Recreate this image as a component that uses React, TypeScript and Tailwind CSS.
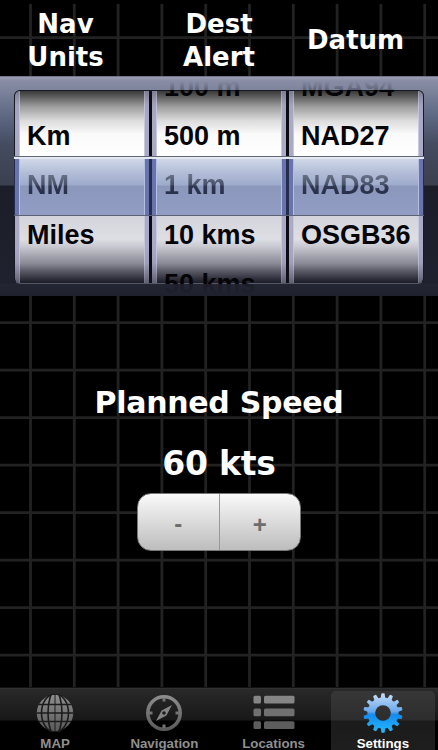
import { useState } from "react";
import clsx from "clsx";

const wheels = [
  { id: "units", rows: ["", "Km", "NM", "Miles", ""] },
  { id: "alert", rows: ["100 m", "500 m", "1 km", "10 kms", "50 kms"] },
  { id: "datum", rows: ["MGA94", "NAD27", "NAD83", "OSGB36", ""] },
];

const verticals = Array.from({ length: 10 }, (_, i) => 30.5 + i * 43.8);
const horizontals = Array.from({ length: 14 }, (_, i) => 37.7 + i * 47.5);

function Grid() {
  return (
    <svg className="absolute inset-0" width="438" height="750" stroke="#222223" strokeWidth="2.8">
      {verticals.map((x) => (
        <line key={x} x1={x} x2={x} y1="4" y2="687" />
      ))}
      {horizontals.map((y) => (
        <line key={y} x1="0" x2="438" y1={y} y2={y} />
      ))}
    </svg>
  );
}

function Picker() {
  return (
    <div className="relative h-[220px] overflow-hidden bg-[linear-gradient(180deg,#474d5c_0,#9ca1b8_1px,#8e93ab_3px,#7c839b_15px,#5b6680_42px,#454c60_68px,#3b404f_109px,#1b1d29_110px,#20222f_219px)] px-[14px]">
      {/* Wheels */}
      <div className="mt-[14px] flex h-[194px] gap-[3px] overflow-hidden rounded-[6px] border border-[#171a23] border-b-[#555766] bg-[#0b0c12]">
        {wheels.map((wheel) => (
          <div
            key={wheel.id}
            className="flex-1 border-x-4 border-[#aaaac7] bg-[linear-gradient(180deg,#4b4b4b_0,#777_7px,#aaa_17px,#ddd_30px,#fafafa_43px,#fff_65px,#fff_115px,#d3d3dc_125px,#dedee4_148px,#c2c2cb_158px,#90909d_174px,#5e5e6b_184px,#272733_192px)] shadow-[inset_1px_0_#c8c8de,inset_-1px_0_#c8c8de]"
          />
        ))}
      </div>
      {/* Darkening of the wheel edges */}
      <div className="absolute top-[15px] left-[15px] h-[192px] w-[408px] rounded-[5px] bg-[linear-gradient(180deg,rgba(20,20,24,.3)_0,rgba(20,20,24,.05)_14px,transparent_30px,transparent_155px,rgba(20,20,30,.08)_172px,rgba(20,20,30,.5)_192px)]" />

      {/* Selection bar */}
      <div className="absolute top-[80px] left-[14px] flex h-[60px] w-[410px] gap-[3px] border-y border-[#5c6175] border-t-[#62677a] bg-[#252c4c] px-px">
        {wheels.map((wheel) => (
          <div
            key={wheel.id}
            className="flex-1 border-x-4 border-[#6974ae] bg-[linear-gradient(180deg,#fff_0,#fff_1px,#d0d8e8_2px,#b1bdd7_16px,#9eabcb_28px,#8c97bc_29px,#929dc4_58px)] shadow-[inset_1px_0_#b5bfe0,inset_-1px_0_#b5bfe0]"
          />
        ))}
        <div className="absolute top-0 left-0 h-[2px] w-full bg-[#e3e8f1]" />
      </div>

      {/* Values */}
      <div className="absolute -top-[13px] left-[15px] flex w-[408px] gap-[3px]">
        {wheels.map((wheel) => (
          <ul key={wheel.id} className="flex-1 pl-[12px] text-[27px] font-bold whitespace-nowrap">
            {wheel.rows.map((row, i) => (
              <li
                key={i}
                className={clsx(
                  "flex h-[49.2px] items-center leading-none",
                  i === 2
                    ? "bg-[linear-gradient(180deg,#656e82_15px,#465067_24px,#303951_25px,#222b43_38px)] bg-clip-text text-transparent"
                    : "text-[#050507]",
                )}
              >
                {row}
              </li>
            ))}
          </ul>
        ))}
      </div>

      {/* Frame over the wheels */}
      <div className="absolute top-[1px] left-0 h-[13px] w-full bg-[linear-gradient(180deg,#989db4_0,#888da5_4px,rgba(124,131,155,.75)_13px)]" />
      <div className="absolute bottom-0 left-0 h-[12px] w-full bg-[linear-gradient(180deg,rgba(38,39,54,.7),#20212e)]" />
    </div>
  );
}

function GlobeIcon() {
  return (
    <svg width="38" height="38" viewBox="0 0 38 38">
      <defs>
        <linearGradient id="grey" gradientUnits="userSpaceOnUse" x1="0" y1="0" x2="0" y2="38">
          <stop offset="0" stopColor="#909090" />
          <stop offset="1" stopColor="#585858" />
        </linearGradient>
      </defs>
      <circle cx="19" cy="19" r="18.2" fill="url(#grey)" />
      <g fill="none" stroke="#1c1c1c" strokeWidth="1.6">
        <path d="M1 19h36M3 10.5h32M3 27.5h32" />
        <path d="M19 0v38" strokeWidth="1" />
        <ellipse cx="19" cy="19" rx="7" ry="22" />
        <ellipse cx="19" cy="19" rx="13.5" ry="19" />
      </g>
    </svg>
  );
}

function CompassIcon() {
  return (
    <svg width="38" height="38" viewBox="0 0 38 38">
      <circle cx="19" cy="19" r="16.2" fill="none" stroke="url(#grey)" strokeWidth="3.6" />
      <path d="M17.5 4h3v3.5h-3zM17.5 30.5h3V34h-3zM4 17.5h3.5v3H4zM30.5 17.5H34v3h-3.5z" fill="#747474" />
      <path
        d="M27 11L21.4 21.4 11 27l5.6-10.4zM19 17.2a1.8 1.8 0 1 0 0 3.6 1.8 1.8 0 1 0 0-3.6z"
        fill="#858585"
        fillRule="evenodd"
      />
    </svg>
  );
}

function ListIcon() {
  return (
    <svg width="42" height="38" viewBox="0 0 42 38">
      {["#858585", "#707070", "#5d5d5d"].map((fill, i) => (
        <g key={fill} fill={fill}>
          <rect x="0.5" y={1.7 + i * 12.8} width="7.5" height="7.8" rx="1.5" />
          <rect x="11" y={1.7 + i * 12.8} width="30.5" height="7.8" rx="1.5" />
        </g>
      ))}
    </svg>
  );
}

function GearIcon() {
  return (
    <svg width="40" height="40" viewBox="0 0 40 40">
      <defs>
        <linearGradient id="blue" gradientUnits="userSpaceOnUse" x1="0" y1="0" x2="0" y2="40">
          <stop offset="0" stopColor="#c9def8" />
          <stop offset="0.46" stopColor="#69a9ee" />
          <stop offset="0.54" stopColor="#168aee" />
          <stop offset="1" stopColor="#23baff" />
        </linearGradient>
        <mask id="gear">
          <circle cx="20" cy="20" r="15.6" fill="#fff" />
          {Array.from({ length: 14 }, (_, i) => (
            <path
              key={i}
              d="M17.6 6L18.4 0.6Q20 0 21.6 0.6L22.4 6z"
              fill="#fff"
              transform={`rotate(${(i * 360) / 14} 20 20)`}
            />
          ))}
          <circle cx="20" cy="20" r="7.8" fill="#000" />
        </mask>
      </defs>
      <rect width="40" height="40" fill="url(#blue)" mask="url(#gear)" />
    </svg>
  );
}

const tabs = [
  { label: "MAP", icon: <GlobeIcon /> },
  { label: "Navigation", icon: <CompassIcon /> },
  { label: "Locations", icon: <ListIcon /> },
  { label: "Settings", icon: <GearIcon /> },
];

export default function App() {
  const [speed, setSpeed] = useState(60);
  const [active, setActive] = useState("Settings");

  return (
    <div className="relative h-[750px] w-[438px] overflow-hidden bg-black font-['Liberation_Sans',Arial,sans-serif]">
      <Grid />
      <div className="relative flex h-full flex-col">
        {/* Headings */}
        <header className="flex h-[76px] items-center pt-[5px] text-center font-['DejaVu_Sans',Verdana,sans-serif] text-[26px] leading-[33px] font-bold text-white">
          <h2 className="w-[131px]">Nav<br />Units</h2>
          <h2 className="w-[176px]">Dest<br />Alert</h2>
          <h2 className="w-[97px] whitespace-nowrap">Datum</h2>
        </header>

        <Picker />

        {/* Speed */}
        <main className="flex flex-1 flex-col items-center pt-[86px] text-white">
          <h1 className="font-['DejaVu_Sans',Verdana,sans-serif] text-[30px] leading-[42px] font-bold tracking-[-0.3px] whitespace-nowrap">
            Planned Speed
          </h1>
          <p className="mt-[19px] font-['DejaVu_Sans',Verdana,sans-serif] text-[33px] leading-[42px] font-bold tracking-[-0.2px]">
            {speed} kts
          </p>
          <div className="mt-[8px] flex h-[58px] w-[164px] overflow-hidden rounded-[14px] border border-[#777] bg-linear-to-b from-[#fafafa] to-[#bdbdbd] text-[24px] font-bold text-[#6d6d6d] [text-shadow:0_1px_#fff]">
            <button className="flex-1 border-r border-[#999] pt-[3px]" onClick={() => setSpeed(speed - 1)}>
              -
            </button>
            <button className="flex-1 pt-[5px]" onClick={() => setSpeed(speed + 1)}>
              +
            </button>
          </div>
        </main>

        {/* Tab bar */}
        <nav className="flex h-[63px] gap-[5px] border-t border-[#111] bg-[linear-gradient(180deg,#383838_0,#292929_1px,#181818_32px,#000_33px)] px-[3px] pt-[3px]">
          {tabs.map((tab) => (
            <button
              key={tab.label}
              onClick={() => setActive(tab.label)}
              className={clsx(
                "flex flex-1 flex-col items-center rounded-t-[5px] text-[13.3px] leading-[13px] font-bold",
                active === tab.label
                  ? "bg-[linear-gradient(180deg,#373737_0,#2d2d2d_29px,#1b1b1b_30px,#1e1e1e_100%)] text-white"
                  : "text-[#8f8f8f]",
              )}
            >
              <span className="mb-[2px] flex h-[44px] items-center justify-center">{tab.icon}</span>
              {tab.label}
            </button>
          ))}
        </nav>
      </div>
    </div>
  );
}
